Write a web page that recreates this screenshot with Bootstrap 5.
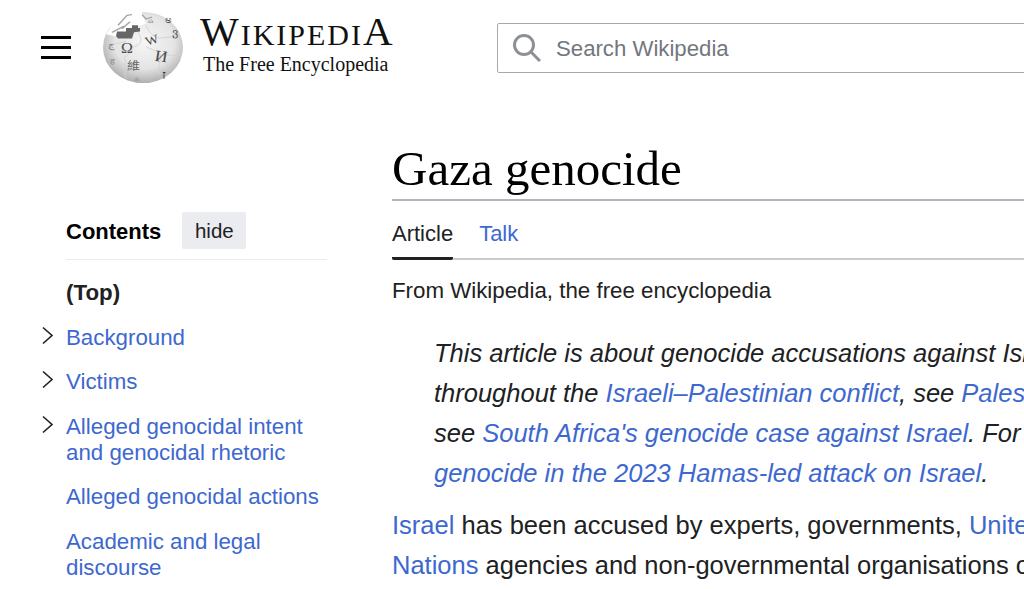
<!DOCTYPE html>
<html lang="en">
<head>
    <meta charset="UTF-8">
    <meta name="viewport" content="width=device-width, initial-scale=1.0">
    <title>Gaza genocide - Wikipedia</title>

    <link rel="stylesheet" href="https://cdn.jsdelivr.net/npm/bootstrap@5.3.0/dist/css/bootstrap.min.css">
    <style>
        html, body {
            height: 589px;
            overflow: hidden;
        }

        body {
            background: #fff;
            color: #202122;
            font-family: "Liberation Sans", Arial, sans-serif;
        }

        a {
            color: #3d68cf;
            text-decoration: none;
        }

        /* Header */
        .wiki-header {
            height: 95px;
            padding-left: 41px;
        }

        .menu-lines {
            width: 30px;
            height: 23px;
            margin-right: 31px;
            flex-direction: column;
            justify-content: space-between;
        }

        .menu-lines span {
            display: block;
            height: 3px;
            background: #000;
        }

        .globe {
            width: 82px;
            height: 73px;
            flex-shrink: 0;
            margin-right: 16px;
            margin-top: -1px;
        }

        .wordmark {
            width: 200px;
            flex-shrink: 0;
            font-family: "Liberation Serif", serif;
            color: #111;
            margin-top: -8px;
        }

        .wordmark-name {
            font-size: 38px;
            line-height: 38px;
            letter-spacing: 2px;
            white-space: nowrap;
        }

        .wordmark-name .big-cap {
            font-size: 41px;
        }

        .wordmark-name .low-cap {
            font-size: 30px;
        }

        .wordmark-tag {
            font-size: 20px;
            line-height: 22px;
            margin-top: -1px;
            padding-left: 3px;
            white-space: nowrap;
        }

        .search-box {
            width: 600px;
            height: 50px;
            margin-left: 97px;
            flex-shrink: 0;
            border: 1px solid #a2a9b1;
            border-radius: 2px;
            padding-left: 15px;
            color: #72777d;
            font-size: 22.2px;
        }

        .search-box svg {
            margin-right: 15px;
        }

        .search-box span {
            padding-top: 2px;
        }

        /* Page body */
        .page-wrap {
            padding-left: 66px;
        }

        .toc-side {
            width: 261px;
            flex-shrink: 0;
            margin-right: 65px;
            padding-top: 117px;
            font-size: 22.3px;
            line-height: 25.6px;
        }

        .toc-head {
            height: 48px;
            padding-bottom: 10px;
            border-bottom: 1px solid #eaecf0;
        }

        .toc-title {
            font-size: 22px;
            font-weight: 700;
            color: #000;
            margin-right: 21px;
            padding-top: 3px;
        }

        .hide-btn {
            width: 64px;
            height: 37px;
            background: #eaecf0;
            border-radius: 2px;
            font-size: 20.5px;
            color: #202122;
            padding-top: 1px;
        }

        .toc-list {
            list-style: none;
            margin: 0;
            padding: 20px 0 0;
        }

        .toc-list li {
            position: relative;
            margin-bottom: 19.1px;
        }

        .toc-top {
            font-weight: 700;
        }

        .toc-arrow {
            position: absolute;
            left: -24px;
            top: 1px;
        }

        .article-col {
            flex: 1 1 auto;
            min-width: 0;
            padding-top: 44px;
            overflow: hidden;
        }

        .page-title {
            font-family: "Liberation Serif", serif;
            font-size: 49px;
            line-height: 59px;
            font-weight: 400;
            color: #000;
            margin: 0;
            border-bottom: 2px solid #b0b5bb;
            height: 62px;
        }

        .tab-row {
            height: 59px;
            border-bottom: 2px solid #c8ccd1;
            font-size: 22px;
            gap: 26px;
        }

        .tab-item {
            height: 59px;
            padding-top: 20px;
            line-height: 26px;
        }

        .tab-active {
            border-bottom: 3px solid #202122;
            border-radius: 2px;
        }

        .site-sub {
            font-size: 22.3px;
            line-height: 26px;
            margin-top: 18px;
            white-space: nowrap;
        }

        .hat-note {
            margin-top: 29px;
            padding-left: 42px;
            font-style: italic;
            font-size: 25.5px;
            line-height: 40px;
            white-space: nowrap;
        }

        .lead-para {
            margin-top: 12px;
            font-size: 25.5px;
            line-height: 40px;
            white-space: nowrap;
        }
    </style>
</head>
<body>
    <header class="wiki-header d-flex align-items-center">
        <div class="menu-lines d-flex flex-shrink-0"><span></span><span></span><span></span></div>
        <svg class="globe" viewBox="0 0 82 82" preserveAspectRatio="none" xmlns="http://www.w3.org/2000/svg">
            <defs>
                <radialGradient id="ball" cx="52%" cy="42%" r="58%">
                    <stop offset="0" stop-color="#f6f6f6"/>
                    <stop offset=".65" stop-color="#e4e4e4"/>
                    <stop offset="1" stop-color="#b0b0b0"/>
                </radialGradient>
            </defs>
            <circle cx="41" cy="41" r="40" fill="url(#ball)"/>
            <!-- missing puzzle pieces on top -->
            <path d="M4 26 L14 8 L32 -1 L40 1 L44 14 L30 20 L20 30 Z" fill="#fff"/>
            <path d="M14 28 L15 23 L24 23 L24 19 L30 19 L30 16 L36 16 L36 19 L38 19 L38 23 L32 24 L30 31 L16 31 Z" fill="#666"/>
            <path d="M10 24 L22 17 M16 16 L25 5 L30 4 M28 12 L20 20 M40 4 L44 9 L50 7" stroke="#a6a6a6" stroke-width="1.5" fill="none"/>
            <!-- seams -->
            <path d="M36 24 C42 34 38 38 32 40 C26 44 28 50 22 52 M44 16 C48 28 56 32 62 30 L78 28 M44 40 C50 44 56 44 58 50 C60 58 54 62 58 72 M8 36 C14 38 18 36 24 34 M22 52 C26 60 20 66 24 76 M58 50 C66 48 72 52 80 48" stroke="#d2d2d2" stroke-width="1" fill="none"/>
            <g font-family="Liberation Serif, serif" fill="#4c4c4c">
                <text x="19" y="47" font-size="16">Ω</text>
                <text x="43" y="37" font-size="14" transform="rotate(-18 50 32)">W</text>
                <text x="53" y="57" font-size="18" transform="rotate(8 60 50)">И</text>
                <text x="25" y="66" font-size="13" font-family="Noto Sans CJK SC, sans-serif" fill="#666">維</text>
                <text x="60" y="76" font-size="14" fill="#333">ז</text>
                <text x="70" y="28" font-size="12" fill="#555">ვ</text>
                <text x="46" y="14" font-size="8" fill="#777">ώ</text>
                <text x="63" y="13" font-size="10" fill="#555">ಅ</text>
                <text x="6" y="42" font-size="10" fill="#777">ج</text>
                <text x="8" y="60" font-size="9" fill="#888">ह</text>
                <text x="32" y="79" font-size="9" fill="#888">க</text>
            </g>
        </svg>
        <div class="wordmark">
            <div class="wordmark-name"><span class="big-cap">W</span><span class="low-cap">IKIPEDI</span><span class="big-cap">A</span></div>
            <div class="wordmark-tag">The Free Encyclopedia</div>
        </div>
        <div class="search-box d-flex align-items-center">
            <svg width="28" height="28" viewBox="0 0 28 28" xmlns="http://www.w3.org/2000/svg">
                <circle cx="11" cy="11" r="9.5" fill="none" stroke="#8c9095" stroke-width="3"/>
                <path d="M18 18 L27 27" stroke="#8c9095" stroke-width="3"/>
            </svg>
            <span>Search Wikipedia</span>
        </div>
    </header>

    <div class="page-wrap d-flex">
        <nav class="toc-side">
            <div class="toc-head d-flex align-items-center">
                <span class="toc-title">Contents</span>
                <span class="hide-btn d-flex align-items-center justify-content-center">hide</span>
            </div>
            <ul class="toc-list">
                <li class="toc-top">(Top)</li>
                <li>
                    <svg class="toc-arrow" width="12" height="20" viewBox="0 0 12 20"><path d="M1 1.5 L10 9.5 L1 17.5" fill="none" stroke="#202122" stroke-width="1.6"/></svg>
                    <a href="#">Background</a>
                </li>
                <li>
                    <svg class="toc-arrow" width="12" height="20" viewBox="0 0 12 20"><path d="M1 1.5 L10 9.5 L1 17.5" fill="none" stroke="#202122" stroke-width="1.6"/></svg>
                    <a href="#">Victims</a>
                </li>
                <li>
                    <svg class="toc-arrow" width="12" height="20" viewBox="0 0 12 20"><path d="M1 1.5 L10 9.5 L1 17.5" fill="none" stroke="#202122" stroke-width="1.6"/></svg>
                    <a href="#">Alleged genocidal intent<br>and genocidal rhetoric</a>
                </li>
                <li><a href="#">Alleged genocidal actions</a></li>
                <li><a href="#">Academic and legal<br>discourse</a></li>
            </ul>
        </nav>

        <main class="article-col">
            <h1 class="page-title">Gaza genocide</h1>
            <div class="tab-row d-flex">
                <div class="tab-item tab-active">Article</div>
                <a class="tab-item" href="#">Talk</a>
            </div>
            <div class="site-sub">From Wikipedia, the free encyclopedia</div>
            <div class="hat-note">
                This article is about genocide accusations against Israel<br>
                throughout the <a href="#">Israeli–Palestinian conflict</a>, see <a href="#">Palestinian</a><br>
                see <a href="#">South Africa's genocide case against Israel</a>. For accusations<br>
                <a href="#">genocide in the 2023 Hamas-led attack on Israel</a>.
            </div>
            <p class="lead-para mb-0">
                <a href="#">Israel</a> has been accused by experts, governments, <a href="#">United</a><br>
                <a href="#">Nations</a> agencies and non-governmental organisations of
            </p>
        </main>
    </div>

    <script src="https://cdn.jsdelivr.net/npm/bootstrap@5.3.0/dist/js/bootstrap.bundle.min.js"></script>
</body>
</html>
